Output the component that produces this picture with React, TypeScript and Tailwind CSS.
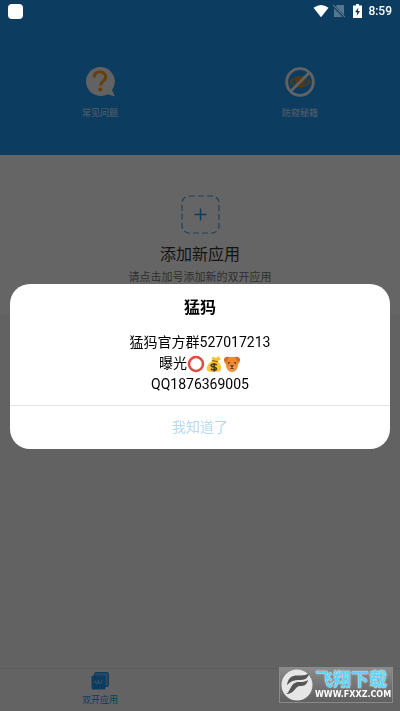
import type { ReactNode } from 'react';

function StatusBar() {
  return (
    <div className="relative z-20 flex h-[22px] items-center justify-between px-2 text-white">
      <span className="h-[15px] w-[15px] rounded-[4px] bg-white" />
      <div className="flex items-center">
        <svg className="h-4 w-4" viewBox="0 0 16 16" fill="currentColor" aria-hidden="true">
          <path d="M.5 4.8Q8 -1 15.500 4.800L8 14.200Z" />
        </svg>
        <svg className="ml-1 h-4 w-3 opacity-30" viewBox="0 0 12 16" aria-hidden="true">
          <path d="M4 2h7v12H1V5Z" fill="currentColor" />
          <path d="M0 2.500 12 14.500" stroke="#0d3c61" strokeWidth="2.600" />
          <path d="M0 2 12 14" stroke="currentColor" strokeWidth="1.200" />
        </svg>
        <svg className="ml-2 h-[14px] w-[9px]" viewBox="0 0 9 14" aria-hidden="true">
          <path d="M3 0h3v1.500h3V14H0V1.500h3Z" fill="currentColor" />
          <path d="M5.400 3.500 2 8.200h2.200L3.700 12 7 7H4.900Z" fill="#0d3c61" />
        </svg>
        <time className="ml-[6px] text-[12px] leading-4 font-medium">8:59</time>
      </div>
    </div>
  );
}

function HeaderAction({ label, children }: { label: string; children: ReactNode }) {
  return (
    <button type="button" className="flex flex-1 flex-col items-center gap-[7px] pt-[44px] text-white/80">
      {children}
      <span className="text-[9px] leading-4">{label}</span>
    </button>
  );
}

function QuestionIcon() {
  return (
    <svg className="h-8 w-8" viewBox="0 0 32 32" fill="none" aria-hidden="true">
      <path d="M16 1a14.500 14.500 0 1 0 7.500 27.200L31 30.500 28 24A14.500 14.500 0 0 0 16 1Z" fill="#f4f4f4" />
      <path d="M10.300 11.500v-.8c0-6.600 11.400-6.600 11.400.3 0 4.500-5.200 4.300-5.200 8.500" stroke="#ff9d1c" strokeWidth="3" />
      <circle cx="16.400" cy="23.600" r="2" fill="#ff9d1c" />
    </svg>
  );
}

function HiddenEyeIcon() {
  return (
    <svg className="h-8 w-8" viewBox="0 0 32 32" fill="none" aria-hidden="true">
      <path d="M6 16Q16 6 26 16 16 25 6 16Z" stroke="#e0952c" strokeWidth="1.600" />
      <circle cx="16" cy="15.500" r="5" fill="#d98a20" />
      <circle cx="17.500" cy="14" r="1.500" fill="#8b7a50" />
      <circle cx="16" cy="16" r="13.300" stroke="#f4f4f4" strokeWidth="2.800" />
      <path d="M6.500 25.500 25.500 6.500" stroke="#f4f4f4" strokeWidth="2.800" />
    </svg>
  );
}

function RingEmoji() {
  return (
    <svg className="h-[18px] w-[18px]" viewBox="0 0 18 18" role="img" aria-label="⭕">
      <circle cx="9" cy="9" r="7" fill="none" stroke="#dd4b42" strokeWidth="2.500" />
    </svg>
  );
}

function MoneyBagEmoji() {
  return (
    <svg className="h-[18px] w-[18px]" viewBox="0 0 18 18" role="img" aria-label="💰">
      <path d="M8 5.500 6.500 2.500 9 2l2 1 2.500-1.800L16 4l-3.500 2.500Z" fill="#f9c22e" />
      <path d="M7.500 5.500 12.500 6.500C16 9 17 12 15.500 15.500 14 17.500 4 17.500 2 15.500.8 11.500 4 8 7.500 5.500Z" fill="#fcc934" />
      <path d="m7 5.500 6 1.300" stroke="#a8701a" strokeWidth="1.300" />
      <path d="M11.800 9.700C8 8 5.600 9.500 6.200 10.900c.7 1.500 5.200.8 5.200 2.800 0 1.700-3.600 1.600-5.600.3M9.200 8v8.400" fill="none" stroke="#4b3b1d" strokeWidth="1.600" />
    </svg>
  );
}

function BearEmoji() {
  return (
    <svg className="h-[18px] w-[18px]" viewBox="0 0 18 18" role="img" aria-label="🐶">
      <path d="M1 4Q3 .8 6 2h6q3-1.200 5 2 .5 3-2 5.500C15 14 12 17 9 17S3 14 3 9.500Q.5 7 1 4Z" fill="#f0882e" />
      <path d="M1 4Q3 .8 6 2L3 7.500Q.8 6.500 1 4ZM17 4Q15 .8 12 2l3 5.500Q17.200 6.500 17 4Z" fill="#cf7027" />
      <ellipse cx="9" cy="12.500" rx="3.500" ry="3" fill="#f7a04e" />
      <path d="M7.200 10.500h3.600L9 12.500ZM6.800 14 9 13l2.200 1" fill="#4e3024" stroke="#4e3024" strokeWidth=".5" />
      <circle cx="5.800" cy="7.800" r=".9" fill="#4e3024" />
      <circle cx="12.200" cy="7.800" r=".9" fill="#4e3024" />
    </svg>
  );
}

function NoticeDialog() {
  return (
    <div className="fixed inset-0 z-10 flex items-center bg-black/60 px-[10px] pt-[22px]">
      <section
        role="dialog"
        aria-modal="true"
        aria-labelledby="notice-title"
        className="w-full overflow-hidden rounded-[20px] bg-white text-center text-black"
      >
        <h2 id="notice-title" className="pt-3 text-[16px] leading-6 font-bold">猛犸</h2>
        <div className="pt-3 pb-[10px] text-[14px] leading-[21px]">
          <p>猛犸官方群527017213</p>
          <p className="flex items-center justify-center">
            曝光
            <RingEmoji />
            <MoneyBagEmoji />
            <BearEmoji />
          </p>
          <p>QQ1876369005</p>
        </div>
        <button type="button" className="h-11 w-full border-t border-[#e4e4e4] text-[14px] text-[#b5d9f3]">
          我知道了
        </button>
      </section>
    </div>
  );
}

function Watermark() {
  return (
    <div className="fixed right-[7px] bottom-2 z-30 flex h-9 w-[114px] items-center gap-[2px] border border-[#8a8a8a] bg-linear-to-b from-[#8a8a8a] to-[#606060] pl-px">
      <svg className="h-8 w-8 shrink-0" viewBox="0 0 32 32" aria-hidden="true">
        <circle cx="16" cy="16" r="15.500" fill="#e6e6e6" />
        <path d="M6 16C7 8 12 6 18 6.500q6 .5 10-2-1 6-8 6.500c-5 .3-8-.8-14 5Z" fill="#555" />
        <path d="M5 25c5-2 4-12 13-12 4 .3 6-.2 9-2-1 5-4 6-8 6-5 0-5 8-14 8Z" fill="#555" />
      </svg>
      <div className="flex flex-col whitespace-nowrap">
        <span className="text-[18px] leading-5 font-bold text-[#5fd3f8] [text-shadow:0_0_1px_#fff,0_0_2px_#e0f7ff]">飞翔下载</span>
        <span className="font-['DejaVu_Sans',sans-serif] text-[8px] leading-[10px] font-bold text-white">WWW.FXXZ.COM</span>
      </div>
    </div>
  );
}

export default function App() {
  return (
    <div className="flex min-h-screen flex-col bg-[#f4f4f4] font-[Roboto,'Noto_Sans_CJK_SC',sans-serif]">
      <header className="h-[155px] bg-[#2196f3]">
        <StatusBar />
        <nav className="flex">
          <HeaderAction label="常见问题"><QuestionIcon /></HeaderAction>
          <HeaderAction label="防窥秘籍"><HiddenEyeIcon /></HeaderAction>
        </nav>
      </header>
      <main className="flex-1">
        <div className="flex h-40 flex-col items-center bg-[#fcfcfc] pt-10">
          <button type="button" aria-label="添加新应用">
            <svg className="h-[39px] w-[39px]" viewBox="0 0 39 39" fill="none" stroke="#4aa3e8" aria-hidden="true">
              <rect x="1" y="1" width="37" height="37" rx="7" strokeWidth="1.200" strokeDasharray="6 3" />
              <path d="M19.500 13.500v12M13.500 19.500h12" stroke="#2196f3" strokeWidth="1.500" />
            </svg>
          </button>
          <h1 className="mt-2 text-[16px] leading-[26px] text-[#333]">添加新应用</h1>
          <p className="mt-[2px] text-[11px] leading-4 text-[#777]">请点击加号添加新的双开应用</p>
        </div>
      </main>
      <footer className="flex h-[43px] border-t border-[#e5e5e5] bg-[#f8f8f8]">
        <button type="button" className="flex w-1/2 flex-col items-center pt-[3px] text-[#2196f3]">
          <svg className="h-[18px] w-[18px]" viewBox="0 0 18 18" aria-hidden="true">
            <rect x="3.500" y=".5" width="14" height="14" rx="1.500" fill="#68b4ee" stroke="currentColor" />
            <rect x=".5" y="3.500" width="14" height="14" rx="1.500" fill="currentColor" />
            <path d="M4 8.500c0 4 3.500 4 3.500 0 0 4 3.500 4 3.500 0" fill="none" stroke="#b7dcfa" />
          </svg>
          <span className="mt-[2px] text-[9px] leading-4">双开应用</span>
        </button>
      </footer>
      <NoticeDialog />
      <Watermark />
    </div>
  );
}
